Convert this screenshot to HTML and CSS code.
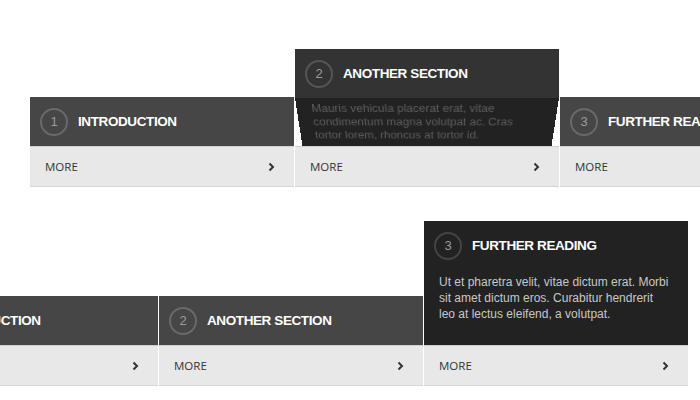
FILE: index.html
```html
<!DOCTYPE html>
<html lang="en">
<head>
    <meta charset="UTF-8">
    <title>Sections</title>
    <link rel="stylesheet" href="styles.css">
</head>
<body>
<div class="row row-top">
    <div class="box">
        <div class="box-top">
            <div class="box-head"><span class="num">1</span><span class="title">INTRODUCTION</span></div>
        </div>
        <div class="box-foot"><span>MORE</span><svg class="arrow" width="7" height="10" viewBox="0 0 7 10"><polyline points="1.5,1.5 5,5 1.5,8.5"/></svg></div>
    </div>
    <div class="box opening">
        <div class="box-top">
            <div class="box-head"><span class="num">2</span><span class="title">ANOTHER SECTION</span></div>
            <p class="box-text">Mauris vehicula placerat erat, vitae condimentum magna volutpat ac. Cras tortor lorem, rhoncus at tortor id.</p>
        </div>
        <div class="box-foot"><span>MORE</span><svg class="arrow" width="7" height="10" viewBox="0 0 7 10"><polyline points="1.5,1.5 5,5 1.5,8.5"/></svg></div>
    </div>
    <div class="box">
        <div class="box-top">
            <div class="box-head"><span class="num">3</span><span class="title">FURTHER READING</span></div>
        </div>
        <div class="box-foot"><span>MORE</span><svg class="arrow" width="7" height="10" viewBox="0 0 7 10"><polyline points="1.5,1.5 5,5 1.5,8.5"/></svg></div>
    </div>
</div>

<div class="row row-bottom">
    <div class="box">
        <div class="box-top">
            <div class="box-head"><span class="num">1</span><span class="title">INTRODUCTION</span></div>
        </div>
        <div class="box-foot"><span>MORE</span><svg class="arrow" width="7" height="10" viewBox="0 0 7 10"><polyline points="1.5,1.5 5,5 1.5,8.5"/></svg></div>
    </div>
    <div class="box">
        <div class="box-top">
            <div class="box-head"><span class="num">2</span><span class="title">ANOTHER SECTION</span></div>
        </div>
        <div class="box-foot"><span>MORE</span><svg class="arrow" width="7" height="10" viewBox="0 0 7 10"><polyline points="1.5,1.5 5,5 1.5,8.5"/></svg></div>
    </div>
    <div class="box open">
        <div class="box-top">
            <div class="box-head"><span class="num">3</span><span class="title">FURTHER READING</span></div>
            <p class="box-text">Ut et pharetra velit, vitae dictum erat. Morbi sit amet dictum eros. Curabitur hendrerit leo at lectus eleifend, a volutpat.</p>
        </div>
        <div class="box-foot"><span>MORE</span><svg class="arrow" width="7" height="10" viewBox="0 0 7 10"><polyline points="1.5,1.5 5,5 1.5,8.5"/></svg></div>
    </div>
</div>
</body>
</html>
```

FILE: styles.css
```css
body { margin: 0; background: #fff; overflow: hidden; font-family: "Liberation Sans", Arial, sans-serif; }
.row { display: flex; align-items: flex-end; gap: 1px; }
.row-top { margin: 49px 0 0 30px; }
.row-bottom { margin: 34px 0 0 -106px; }
.box { flex: 0 0 264px; width: 264px; }
.box-top { height: 49px; overflow: hidden; }
.box-head { display: flex; align-items: center; gap: 10px; height: 49px; padding-left: 10px; background: #464646; }
.num { display: flex; align-items: center; justify-content: center; width: 24px; height: 24px; border: 2px solid #696969; border-radius: 50%; color: #9a9a9a; font-size: 13px; }
.title { color: #fff; font-weight: bold; font-size: 13.5px; letter-spacing: -0.4px; }
.box-text { margin: 0; padding: 4px 18px 23px 15px; font-size: 12px; line-height: 16px; color: #c8c8c8; background: #222; }
.box-foot { display: flex; align-items: center; justify-content: space-between; height: 39px; padding: 0 19px 0 15px; background: #e8e8e8; border-top: 1px solid #d0d0d0; border-bottom: 1px solid #d6d6d6; color: #333; font-family: "Open Sans", sans-serif; font-size: 11.5px; }
.arrow polyline { fill: none; stroke: #333; stroke-width: 2; }

/* fully opened */
.open .box-top { height: auto; }
.open .box-head { background: #222; }
.open .num { border-color: #444; }

/* half way through the opening */
.opening .box-top { height: 97px; }
.opening .box-head { background: #333; }
.opening .num { border-color: #555; }
.opening .box-text { color: #5e5e5e; transform-origin: top; transform: perspective(450px) rotateX(-28deg); }
```
